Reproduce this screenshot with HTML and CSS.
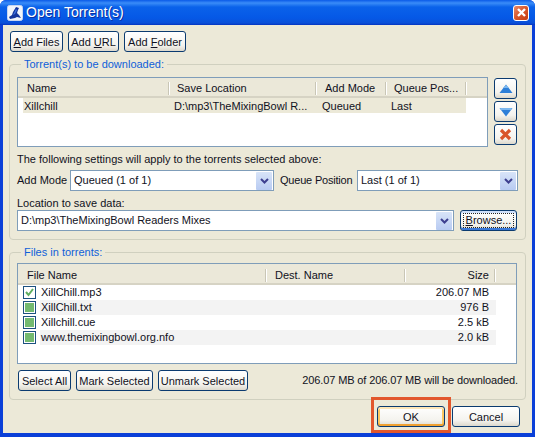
FILE: index.html
```html
<!DOCTYPE html>
<html>
	<head>
		<title>Open Torrent(s)</title>
		<link rel="stylesheet" href="styles.css">
	</head>
	<body>
		<div class="window">
			<div class="titlebar">
				<svg class="app-icon" width="16" height="16" viewBox="0 0 16 16">
					<rect x="0.5" y="0.5" width="15" height="15" rx="2" fill="#f2f5fb" stroke="#c9d6f0"/>
					<path d="M9 2 L12 3 L11 5 L10 8 L12 10 L14 13 L10 12 L8 13 L3 14 L2 12 L5 10 L6 7 Z" fill="#14349c"/>
					<path d="M9 4 L10 5 L8 9 L6 10 Z" fill="#3f72e0"/>
				</svg>
				<span class="title">Open Torrent(s)</span>
				<div class="close-btn">
					<svg width="11" height="11" viewBox="0 0 11 11"><path d="M2 2 L9 9 M9 2 L2 9" stroke="#fff" stroke-width="2.4"/></svg>
				</div>
			</div>
			<div class="client">
				<div class="toolbar">
					<button class="w53"><u>A</u>dd Files</button>
					<button class="w51">Add <u>U</u>RL</button>
					<button class="w62">Add <u>F</u>older</button>
				</div>
				<fieldset class="group group-top">
					<legend>Torrent(s) to be downloaded:</legend>
					<div class="list-row">
						<div class="list torrents">
							<div class="head head-torrents">
								<div class="col pad9">Name</div>
								<div class="col pad8">Save Location</div>
								<div class="col pad9">Add Mode</div>
								<div class="col pad8">Queue Pos...</div>
							</div>
							<div class="row row-torrents">
								<div class="cell">Xillchill</div>
								<div class="cell">D:\mp3\TheMixingBowl R...</div>
								<div class="cell">Queued</div>
								<div class="cell">Last</div>
							</div>
						</div>
						<div class="side-btns">
							<button class="icon-btn">
								<svg width="14" height="10" viewBox="0 0 14 10"><path d="M7 0.5 L13.5 9 L0.5 9 Z" fill="#2d7fd8"/><path d="M4 4 L10 4 L7 1 Z" fill="#7db8ef"/></svg>
							</button>
							<button class="icon-btn">
								<svg width="14" height="10" viewBox="0 0 14 10"><path d="M0.5 1 L13.5 1 L7 9.5 Z" fill="#2d7fd8"/><path d="M1 1 L13 1 L12 3 L2 3 Z" fill="#7db8ef"/></svg>
							</button>
							<button class="icon-btn">
								<svg width="13" height="13" viewBox="0 0 13 13"><path d="M2 2 L11 11 M11 2 L2 11" stroke="#d9562b" stroke-width="3.2"/></svg>
							</button>
						</div>
					</div>
					<div class="note">The following settings will apply to the torrents selected above:</div>
					<div class="settings">
						<label>Add Mode</label>
						<div class="combo"><span>Queued (1 of 1)</span><i class="arrow"><svg width="9" height="6" viewBox="0 0 9 6"><path d="M1 1 L4.500 4.500 L8 1" fill="none" stroke="#3d3f8f" stroke-width="2"/></svg></i></div>
						<label class="indent">Queue Position</label>
						<div class="combo"><span>Last (1 of 1)</span><i class="arrow"><svg width="9" height="6" viewBox="0 0 9 6"><path d="M1 1 L4.500 4.500 L8 1" fill="none" stroke="#3d3f8f" stroke-width="2"/></svg></i></div>
					</div>
					<div class="loc-label">Location to save data:</div>
					<div class="location">
						<div class="combo"><span>D:\mp3\TheMixingBowl Readers Mixes</span><i class="arrow"><svg width="9" height="6" viewBox="0 0 9 6"><path d="M1 1 L4.500 4.500 L8 1" fill="none" stroke="#3d3f8f" stroke-width="2"/></svg></i></div>
						<button class="browse"><span class="focus"><u>B</u>rowse...</span></button>
					</div>
				</fieldset>
				<fieldset class="group group-bottom">
					<legend>Files in torrents:</legend>
					<div class="list files">
						<div class="head head-files">
							<div class="col pad9">File Name</div>
							<div class="col pad9">Dest. Name</div>
							<div class="col size">Size</div>
						</div>
						<div class="row row-files">
							<i class="check"><svg width="11" height="11" viewBox="0 0 11 11"><path d="M2 5 L4.500 8 L9 2" fill="none" stroke="#5fae5f" stroke-width="2"/></svg></i>
							<div class="cell name">XillChill.mp3</div>
							<div class="cell size">206.07 MB</div>
						</div>
						<div class="row row-files alt">
							<i class="check"><b></b></i>
							<div class="cell name">XillChill.txt</div>
							<div class="cell size">976 B</div>
						</div>
						<div class="row row-files">
							<i class="check"><b></b></i>
							<div class="cell name">Xillchill.cue</div>
							<div class="cell size">2.5 kB</div>
						</div>
						<div class="row row-files alt">
							<i class="check"><b></b></i>
							<div class="cell name">www.themixingbowl.org.nfo</div>
							<div class="cell size">2.0 kB</div>
						</div>
					</div>
					<div class="files-foot">
						<button class="w53">Select All</button>
						<button class="w77">Mark Selected</button>
						<button class="w90">Unmark Selected</button>
						<div class="summary">206.07 MB of 206.07 MB will be downloaded.</div>
					</div>
				</fieldset>
				<div class="footer">
					<button class="dialog-btn ok">OK</button>
					<button class="dialog-btn">Cancel</button>
				</div>
				<div class="highlight"></div>
			</div>
		</div>
	</body>
</html>
```

FILE: styles.css
```css
* {
	box-sizing: border-box;
}
html, body {
	margin: 0;
	background: #ffffff;
}
body {
	font-family: "Liberation Sans", sans-serif;
	font-size: 11px;
	line-height: 13px;
	color: #111122;
}
.window {
	width: 535px;
	height: 437px;
	display: flex;
	flex-direction: column;
	background: #0a3fd8;
	border-radius: 6px 6px 0 0;
	overflow: hidden;
}
.titlebar {
	height: 25px;
	flex: none;
	display: flex;
	align-items: center;
	padding: 0 6px 0 7px;
	background: linear-gradient(#0a5ae8 0, #3a8cf8 3px, #0a62ea 7px, #0558e6 18px, #0a50d8 23px, #0433c0 25px);
}
.app-icon {
	flex: none;
}
.title {
	margin-left: 3px;
	font-size: 14px;
	color: #ffffff;
	text-shadow: 1px 1px 0 #0a2fa0;
	flex: 1;
}
.close-btn {
	width: 16px;
	height: 16px;
	display: flex;
	align-items: center;
	justify-content: center;
	border: 1px solid #ffffff;
	border-radius: 3px;
	background: linear-gradient(135deg, #e88a6a, #d8562a 50%, #c43c12);
}
.client {
	position: relative;
	flex: 1;
	margin: 0 3px 4px 3px;
	padding: 6px 0 0 7px;
	background: #ece9d8;
}
button {
	font: inherit;
	color: inherit;
	height: 21px;
	padding: 1px 0 0;
	border: 1px solid #0b3b70;
	border-radius: 3px;
	background: linear-gradient(#ffffff, #f4f3ee 70%, #dcd8cc);
	text-align: center;
	flex: none;
}
.toolbar {
	display: flex;
	gap: 5px;
}
.w53 { width: 53px; }
.w51 { width: 51px; }
.w62 { width: 62px; }
.w77 { width: 77px; }
.w90 { width: 90px; }

.group {
	margin: 6px 0 0 -1px;
	width: 517px;
	padding: 6px 0 8px 7px;
	border: 1px solid #d0d0bf;
	border-radius: 4px;
	min-width: 0;
}
legend {
	margin-left: 4px;
	padding: 0 3px;
	color: #0f5fd8;
}
.list-row {
	display: flex;
	gap: 6px;
}
.list {
	background: #ffffff;
	border: 1px solid #7f9db9;
}
.torrents {
	width: 471px;
	height: 70px;
}
.head {
	display: grid;
	height: 20px;
	background: #ebe8d9;
	border-bottom: 2px solid #d6d3c4;
	padding-top: 4px;
}
.head-torrents {
	grid-template-columns: 151px 147px 70px 80px;
}
.head-files {
	height: 21px;
	padding-top: 5px;
	grid-template-columns: 248px 139px 90px;
}
.col {
	height: 13px;
	border-right: 1px solid #c9c6b6;
	box-shadow: 1px 0 0 #ffffff;
}
.pad9 { padding-left: 9px; }
.pad8 { padding-left: 8px; }
.col.size {
	text-align: right;
	padding-right: 5px;
}
.row {
	display: grid;
	height: 15px;
	align-items: center;
}
.row-torrents {
	grid-template-columns: 150px 148px 69px 76px;
	margin-left: 5px;
	width: 443px;
	background: #ece9d8;
}
.row-torrents .cell {
	padding-top: 1px;
}
.cell {
	padding-left: 1px;
	white-space: nowrap;
}
.side-btns {
	display: flex;
	flex-direction: column;
	gap: 2px;
	padding-top: 1px;
}
.icon-btn {
	width: 23px;
	padding: 0;
	display: flex;
	align-items: center;
	justify-content: center;
}
.note {
	margin-top: 6px;
}
.settings {
	display: grid;
	grid-template-columns: 53px 204px 83px 161px;
	align-items: center;
	margin-top: 4px;
}
.indent {
	padding-left: 6px;
	letter-spacing: -0.2px;
	white-space: nowrap;
}
.combo {
	height: 21px;
	display: flex;
	align-items: center;
	justify-content: space-between;
	padding: 1px 1px 1px 3px;
	background: #ffffff;
	border: 1px solid #7f9db9;
}
.arrow {
	width: 16px;
	height: 18px;
	display: flex;
	align-items: center;
	justify-content: center;
	background: linear-gradient(#d8e4f8, #b8cbf2);
	border-radius: 1px;
}
.loc-label {
	margin-top: 6px;
}
.location {
	display: grid;
	grid-template-columns: 437px 57px;
	column-gap: 6px;
}
.browse {
	box-shadow: inset 0 -2px 0 #3a78d8, inset 0 2px 0 #cfe0fa;
	padding: 2px;
}
.focus {
	display: block;
	height: 15px;
	border: 1px dotted #222222;
}

.files {
	width: 500px;
	height: 101px;
}
.group-bottom {
	margin-top: 6px;
	padding-top: 4px;
}
.row-files {
	grid-template-columns: 22px 225px 231px;
	width: 478px;
}
.row-files .name {
	grid-column: 2;
}
.row-files .size {
	grid-column: 3;
	text-align: right;
	padding-right: 7px;
}
.alt .cell {
	background: #f3f3f3;
	height: 15px;
	line-height: 15px;
}
.check {
	margin-left: 5px;
	width: 13px;
	height: 13px;
	display: flex;
	align-items: center;
	justify-content: center;
	border: 1px solid #1c5180;
	background: #ffffff;
}
.check b {
	display: block;
	width: 9px;
	height: 9px;
	background: #73ba71;
}
.files-foot {
	display: flex;
	align-items: center;
	gap: 5px;
	margin: 6px 0 0 1px;
	width: 500px;
}
.summary {
	margin-left: auto;
	white-space: nowrap;
	letter-spacing: -0.12px;
}
.footer {
	display: flex;
	justify-content: flex-end;
	gap: 7px;
	margin: 6px 12px 0 0;
}
.dialog-btn {
	width: 68px;
}
.ok {
	box-shadow: inset 0 2px 0 #fde6b8, inset 0 -2px 0 #f0a030, inset 2px 0 0 #fbc761, inset -2px 0 0 #fbc761;
}
.highlight {
	position: absolute;
	left: 368px;
	top: 372px;
	width: 80px;
	height: 36px;
	border: 3px solid #e2572c;
}
```
